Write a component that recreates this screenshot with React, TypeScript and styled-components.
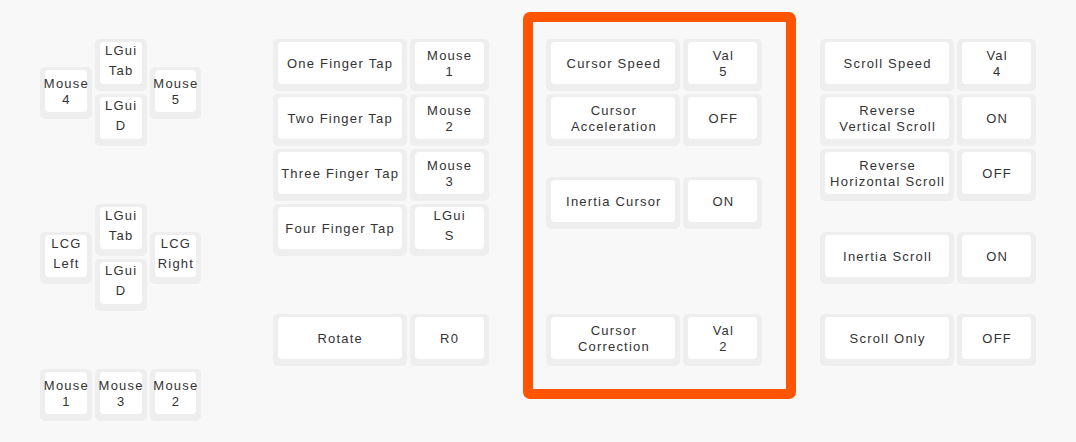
import React from 'react';
import styled, { createGlobalStyle } from 'styled-components';

const UX = 54.8;
const UY = 55;

const GlobalStyle = createGlobalStyle`
  html, body { margin: 0; padding: 0; background: #f8f8f8; }
  body { font-family: "Liberation Sans", Arial, sans-serif; }
`;

const Page = styled.div`
  width: 1076px;
  height: 442px;
  box-sizing: border-box;
  padding: 39px 0 0 40px;
  overflow: hidden;
  background: #f8f8f8;
`;

const Board = styled.div`
  position: relative;
  display: grid;
  grid-template-columns: repeat(73, ${UX / 4}px);
  grid-template-rows: repeat(14, ${UY / 2}px);
`;

const Cap = styled.div<{ $x: number; $y: number; $w: number }>`
  grid-column: ${(p) => p.$x * 4 + 1} / span ${(p) => p.$w * 4};
  grid-row: ${(p) => p.$y * 2 + 1} / span 2;
  margin: 0 3px 3px 0;
  min-width: 0;
  box-sizing: border-box;
  padding: 3px 5px 7px;
  background: #eeeeee;
  border-radius: 5px;
  display: flex;
`;

const Face = styled.div<{ $spaced?: boolean }>`
  flex: 1 1 0;
  min-width: 0;
  background: #ffffff;
  border-radius: 4px;
  display: flex;
  flex-direction: column;
  align-items: center;
  justify-content: center;
  box-sizing: border-box;
  padding: ${(p) => (p.$spaced ? '0 0 4px 1px' : '2px 0 0 1px')};
  font-size: 13px;
  letter-spacing: 1.2px;
  color: #333333;
  line-height: ${(p) => (p.$spaced ? '20px' : '16px')};
  text-align: center;
  white-space: nowrap;
`;

const Legend = styled.span`
  display: block;
  width: 0;
  display: flex;
  justify-content: center;
`;

const Highlight = styled.div`
  position: absolute;
  left: 483px;
  top: -27px;
  width: 273px;
  height: 387px;
  box-sizing: border-box;
  border: 10px solid #ff5500;
  border-radius: 7px;
  pointer-events: none;
`;

type KeyDef = { x: number; y: number; w?: number; lines: string[]; spaced?: boolean };

const keys: KeyDef[] = [
  { x: 0, y: 0.5, lines: ['Mouse', '4'] },
  { x: 1, y: 0, lines: ['LGui', 'Tab'], spaced: true },
  { x: 1, y: 1, lines: ['LGui', 'D'], spaced: true },
  { x: 2, y: 0.5, lines: ['Mouse', '5'] },
  { x: 0, y: 3.5, lines: ['LCG', 'Left'], spaced: true },
  { x: 1, y: 3, lines: ['LGui', 'Tab'], spaced: true },
  { x: 1, y: 4, lines: ['LGui', 'D'], spaced: true },
  { x: 2, y: 3.5, lines: ['LCG', 'Right'], spaced: true },
  { x: 0, y: 6, lines: ['Mouse', '1'] },
  { x: 1, y: 6, lines: ['Mouse', '3'] },
  { x: 2, y: 6, lines: ['Mouse', '2'] },
  { x: 4.25, y: 0, w: 2.5, lines: ['One Finger Tap'] },
  { x: 6.75, y: 0, w: 1.5, lines: ['Mouse', '1'] },
  { x: 4.25, y: 1, w: 2.5, lines: ['Two Finger Tap'] },
  { x: 6.75, y: 1, w: 1.5, lines: ['Mouse', '2'] },
  { x: 4.25, y: 2, w: 2.5, lines: ['Three Finger Tap'] },
  { x: 6.75, y: 2, w: 1.5, lines: ['Mouse', '3'] },
  { x: 4.25, y: 3, w: 2.5, lines: ['Four Finger Tap'] },
  { x: 6.75, y: 3, w: 1.5, lines: ['LGui', 'S'], spaced: true },
  { x: 4.25, y: 5, w: 2.5, lines: ['Rotate'] },
  { x: 6.75, y: 5, w: 1.5, lines: ['R0'] },
  { x: 9.25, y: 0, w: 2.5, lines: ['Cursor Speed'] },
  { x: 11.75, y: 0, w: 1.5, lines: ['Val', '5'] },
  { x: 9.25, y: 1, w: 2.5, lines: ['Cursor', 'Acceleration'] },
  { x: 11.75, y: 1, w: 1.5, lines: ['OFF'] },
  { x: 9.25, y: 2.5, w: 2.5, lines: ['Inertia Cursor'] },
  { x: 11.75, y: 2.5, w: 1.5, lines: ['ON'] },
  { x: 9.25, y: 5, w: 2.5, lines: ['Cursor', 'Correction'] },
  { x: 11.75, y: 5, w: 1.5, lines: ['Val', '2'] },
  { x: 14.25, y: 0, w: 2.5, lines: ['Scroll Speed'] },
  { x: 16.75, y: 0, w: 1.5, lines: ['Val', '4'] },
  { x: 14.25, y: 1, w: 2.5, lines: ['Reverse', 'Vertical Scroll'] },
  { x: 16.75, y: 1, w: 1.5, lines: ['ON'] },
  { x: 14.25, y: 2, w: 2.5, lines: ['Reverse', 'Horizontal Scroll'] },
  { x: 16.75, y: 2, w: 1.5, lines: ['OFF'] },
  { x: 14.25, y: 3.5, w: 2.5, lines: ['Inertia Scroll'] },
  { x: 16.75, y: 3.5, w: 1.5, lines: ['ON'] },
  { x: 14.25, y: 5, w: 2.5, lines: ['Scroll Only'] },
  { x: 16.75, y: 5, w: 1.5, lines: ['OFF'] },
];

export default function App() {
  return (
    <>
      <GlobalStyle />
      <Page>
        <Board>
          {keys.map((k, i) => (
            <Cap key={i} $x={k.x} $y={k.y} $w={k.w ?? 1}>
              <Face $spaced={k.spaced}>
                {k.lines.map((l, j) => (
                  <Legend key={j}>{l}</Legend>
                ))}
              </Face>
            </Cap>
          ))}
          <Highlight />
        </Board>
      </Page>
    </>
  );
}
